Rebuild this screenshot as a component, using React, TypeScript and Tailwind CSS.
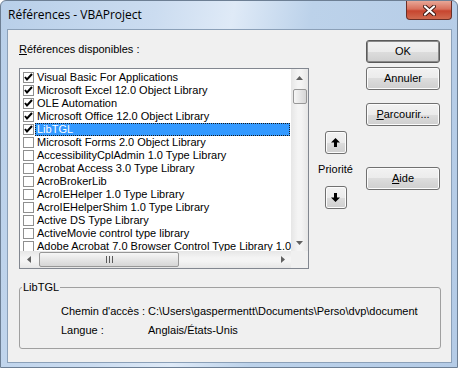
const refs = [
  { name: "Visual Basic For Applications", checked: true },
  { name: "Microsoft Excel 12.0 Object Library", checked: true },
  { name: "OLE Automation", checked: true },
  { name: "Microsoft Office 12.0 Object Library", checked: true },
  { name: "LibTGL", checked: true, selected: true },
  { name: "Microsoft Forms 2.0 Object Library" },
  { name: "AccessibilityCplAdmin 1.0 Type Library" },
  { name: "Acrobat Access 3.0 Type Library" },
  { name: "AcroBrokerLib" },
  { name: "AcroIEHelper 1.0 Type Library" },
  { name: "AcroIEHelperShim 1.0 Type Library" },
  { name: "Active DS Type Library" },
  { name: "ActiveMovie control type library" },
  { name: "Adobe Acrobat 7.0 Browser Control Type Library 1.0" },
];

function Box({ checked }: { checked?: boolean }) {
  return (
    <div className="ml-[3px] flex h-[11px] w-[11px] shrink-0 items-center justify-center border border-[#8f8f8f] bg-white">
      {checked && (
        <svg width="9" height="9" viewBox="0 0 9 9">
          <path d="M1 4 L3 6.5 L8 1" stroke="#000" strokeWidth="2" fill="none" />
        </svg>
      )}
    </div>
  );
}

function Btn({ children, def }: { children: React.ReactNode; def?: boolean }) {
  return (
    <div
      className={
        "flex h-[23px] w-[74px] items-center justify-center rounded-[3px] border bg-[linear-gradient(to_bottom,#f2f2f2_0%,#ebebeb_50%,#dddddd_50%,#cfcfcf_100%)] " +
        (def
          ? "border-[#5a5a5a] shadow-[inset_0_0_0_1px_#8a8a8a]"
          : "border-[#707070] shadow-[inset_0_0_0_1px_#fcfcfc]")
      }
    >
      {children}
    </div>
  );
}

function Arrow({ down }: { down?: boolean }) {
  return (
    <div className="flex h-[23px] w-[22px] items-center justify-center rounded-[3px] border border-[#707070] bg-[linear-gradient(to_bottom,#f2f2f2_0%,#ebebeb_50%,#dddddd_50%,#cfcfcf_100%)] shadow-[inset_0_0_0_1px_#fcfcfc]">
      <svg width="9" height="9" viewBox="0 0 9 9" className={down ? "rotate-180" : ""}>
        <path d="M4.5 0 L9 4.5 L6 4.5 L6 9 L3 9 L3 4.5 L0 4.5 Z" fill="#000" />
      </svg>
    </div>
  );
}

function Tri({ dir }: { dir: "up" | "down" | "left" | "right" }) {
  const d = {
    up: "M0 4 L3.5 0 L7 4 Z",
    down: "M0 0 L7 0 L3.5 4 Z",
    left: "M4 0 L4 7 L0 3.5 Z",
    right: "M0 0 L4 3.5 L0 7 Z",
  }[dir];
  const vert = dir === "up" || dir === "down";
  return (
    <svg width={vert ? 7 : 4} height={vert ? 4 : 7} viewBox={vert ? "0 0 7 4" : "0 0 4 7"}>
      <path d={d} fill="#606060" />
    </svg>
  );
}

export default function App() {
  return (
    <div className="flex h-[368px] w-[458px] flex-col rounded-t-[6px] border border-[#6d7f94] bg-[linear-gradient(100deg,#b8cfe9_0%,#cbdcf0_30%,#dfeaf7_45%,#bcd2ea_60%,#b4cbe6_100%)] font-['Liberation_Sans',sans-serif] text-[11px] text-black">
      <div className="flex h-[28px] items-start justify-between">
        <div className="ml-[7px] mt-[6px] font-['Open_Sans',sans-serif] text-[12px] leading-[16px] text-[#000]">
          Références - VBAProject
        </div>
        <div className="mr-[5px] flex h-[19px] w-[46px] items-center justify-center rounded-b-[4px] border border-t-0 border-[#6a2f27] bg-[linear-gradient(to_bottom,#e8a797_0%,#d8705c_45%,#c7452f_55%,#d06a4f_100%)]">
          <svg width="13" height="11" viewBox="0 0 13 11">
            <path d="M2 1.5 L11 9.5 M11 1.5 L2 9.5" stroke="#3b1712" strokeWidth="4" strokeLinecap="round" />
            <path d="M2 1.5 L11 9.5 M11 1.5 L2 9.5" stroke="#fff" strokeWidth="2.2" strokeLinecap="round" />
          </svg>
        </div>
      </div>

      <div className="ml-[6px] mr-[5px] h-[334px] border border-[#8ba0b8] bg-[#f0f0f0]">
        <div className="flex">
          <div className="ml-[11px] flex flex-col">
            <div className="mt-[12px] h-[14px] leading-[14px]">
              <span className="underline">R</span>éférences disponibles :
            </div>
            <div className="mt-[12px] grid h-[201px] w-[290px] grid-cols-[271px_17px] grid-rows-[182px_17px] border border-[#828790] bg-white">
              <div className="overflow-hidden pt-[2px]">
                {refs.map((r) => (
                  <div key={r.name} className="flex h-[13px] items-center">
                    <Box checked={r.checked} />
                    <div
                      className={
                        "ml-[1px] mr-[1px] h-[13px] flex-1 whitespace-nowrap border px-[1px] leading-[11px] " +
                        (r.selected
                          ? "border-dotted border-[#1a1a1a] bg-[#3399ff] text-white"
                          : "border-transparent")
                      }
                    >
                      {r.name}
                    </div>
                  </div>
                ))}
              </div>
              <div className="flex flex-col items-center bg-[linear-gradient(to_right,#e6e6e6,#f4f4f4_40%,#f4f4f4_60%,#e6e6e6)]">
                <div className="flex h-[17px] items-center">
                  <Tri dir="up" />
                </div>
                <div className="mt-[3px] h-[15px] w-[14px] rounded-[2px] border border-[#979797] bg-[linear-gradient(to_right,#f6f6f6,#e6e6e6_50%,#d6d6d6)]" />
                <div className="flex-1" />
                <div className="flex h-[17px] items-center">
                  <Tri dir="down" />
                </div>
              </div>
              <div className="flex items-center bg-[linear-gradient(to_bottom,#e6e6e6,#f4f4f4_40%,#f4f4f4_60%,#e6e6e6)]">
                <div className="flex w-[17px] justify-center">
                  <Tri dir="left" />
                </div>
                <div className="ml-[2px] flex h-[15px] w-[140px] items-center justify-center rounded-[2px] border border-[#979797] bg-[linear-gradient(to_bottom,#f6f6f6,#e6e6e6_50%,#d6d6d6)]">
                  <svg width="7" height="7" viewBox="0 0 7 7">
                    <path d="M0.5 0 V7 M3.5 0 V7 M6.5 0 V7" stroke="#5a5a5a" strokeWidth="1" />
                  </svg>
                </div>
                <div className="flex-1" />
                <div className="flex w-[17px] justify-center">
                  <Tri dir="right" />
                </div>
              </div>
              <div className="bg-[#f0f0f0]" />
            </div>
          </div>

          <div className="ml-[7px] flex w-[39px] flex-col items-center">
            <div className="mt-[101px]">
              <Arrow />
            </div>
            <div className="mt-[9px] h-[13px] leading-[13px]">Priorité</div>
            <div className="mt-[10px]">
              <Arrow down />
            </div>
          </div>

          <div className="ml-[11px] flex flex-col">
            <div className="mt-[10px]">
              <Btn def>OK</Btn>
            </div>
            <div className="mt-[4px]">
              <Btn>Annuler</Btn>
            </div>
            <div className="mt-[13px]">
              <Btn>
                <span className="underline">P</span>arcourir...
              </Btn>
            </div>
            <div className="mt-[41px]">
              <Btn>
                <span className="underline">A</span>ide
              </Btn>
            </div>
          </div>
        </div>

        <fieldset className="ml-[11px] mt-[12px] h-[68px] w-[422px] rounded-[3px] border border-[#a0a0a0]">
          <legend className="ml-[2px] px-[1px] leading-[13px]">LibTGL</legend>
          <div className="mt-[11px] flex h-[13px] items-center pl-[41px]">
            <div className="w-[87px]">Chemin d'accès :</div>
            <div className="w-[270px] overflow-hidden whitespace-nowrap">
              C:\Users\gaspermentt\Documents\Perso\dvp\documents
            </div>
          </div>
          <div className="mt-[6px] flex h-[13px] items-center pl-[41px]">
            <div className="w-[87px]">Langue :</div>
            <div>Anglais/États-Unis</div>
          </div>
        </fieldset>
      </div>
    </div>
  );
}
